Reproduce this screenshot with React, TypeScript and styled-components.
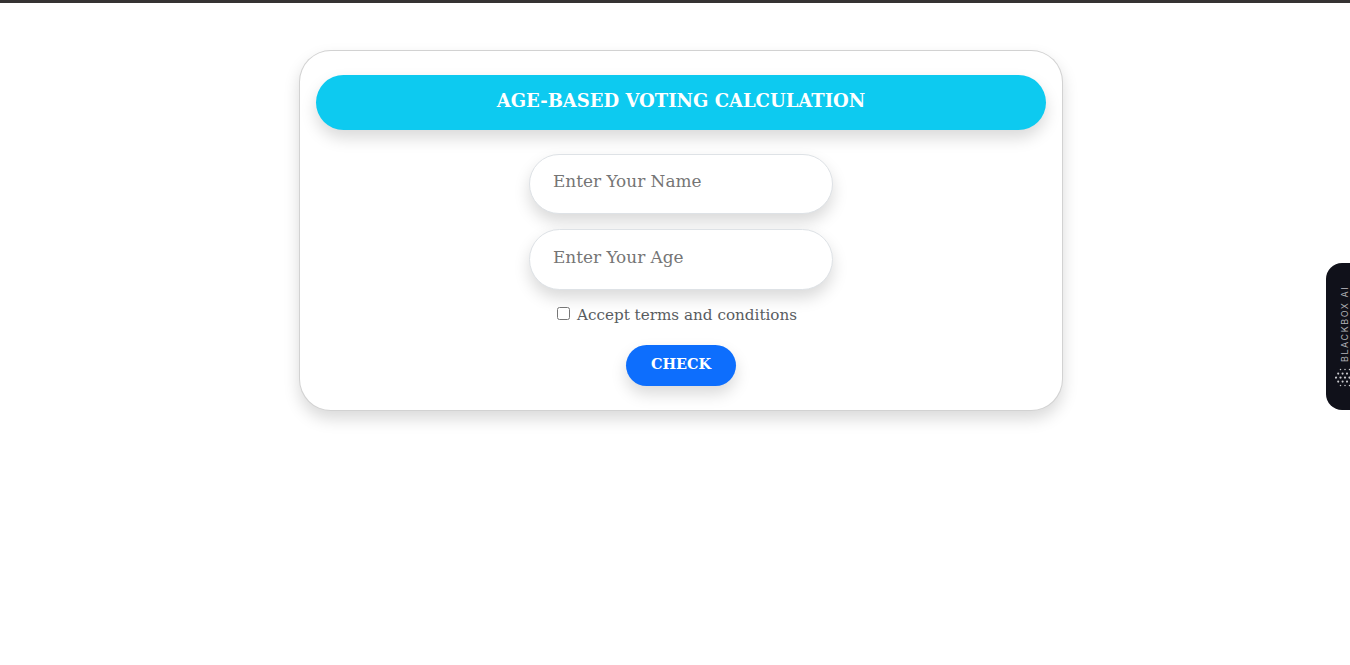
import React from 'react';
import styled, { createGlobalStyle } from 'styled-components';

const GlobalStyle = createGlobalStyle`
  *, *::before, *::after { box-sizing: border-box; }
  html, body { margin: 0; height: 100%; background: #fff; overflow: hidden; }
  body { font-family: 'Bookman Old Style', 'DejaVu Serif', serif; color: #212529; }
`;

const Page = styled.main`
  min-height: 665px;
  padding: 47px 0 0 299px;
  border-top: 3px solid #353333;
`;

const Card = styled.section`
  width: 764px;
  height: 361px;
  padding: 24px 16px;
  display: flex;
  flex-direction: column;
  align-items: center;
  border: 1px solid rgba(0, 0, 0, 0.175);
  border-radius: 32px;
  background: #fff;
  box-shadow: 0 8px 16px rgba(0, 0, 0, 0.15);
`;

const Title = styled.h1`
  width: 100%;
  height: 55px;
  margin: 0 0 24px;
  padding-top: 14px;
  border-radius: 32px;
  background: #0dcaf0;
  box-shadow: 0 8px 16px rgba(0, 0, 0, 0.15);
  color: #fff;
  font-size: 18px;
  line-height: 24px;
  font-weight: 700;
  text-align: center;
  white-space: nowrap;
`;

const Field = styled.input<{ $tall?: boolean }>`
  width: 304px;
  height: ${(p) => (p.$tall ? 61 : 60)}px;
  margin: 0 0 15px;
  padding: 0 23px 6px;
  border: 1px solid #dee2e6;
  border-radius: 32px;
  background: #fff;
  box-shadow: 0 8px 16px rgba(0, 0, 0, 0.15);
  font-family: inherit;
  font-size: 16.9px;
  outline: none;
  &::placeholder { color: #757575; opacity: 1; }
`;

const Terms = styled.label`
  display: flex;
  align-items: center;
  width: 248px;
  height: 20px;
  gap: 7px;
  font-size: 15.2px;
  color: #595c5f;
  white-space: nowrap;
`;

const Checkbox = styled.input`
  flex: none;
  width: 13px;
  height: 13px;
  margin: 0 0 4px;
`;

const CheckButton = styled.button`
  width: 110px;
  height: 41px;
  margin-top: 20px;
  padding: 0 0 4px;
  border: 0;
  border-radius: 32px;
  background: #0d6efd;
  box-shadow: 0 8px 16px rgba(0, 0, 0, 0.15);
  color: #fff;
  font-family: inherit;
  font-size: 14.4px;
  font-weight: 700;
`;

const SideTab = styled.aside`
  position: fixed;
  top: 263px;
  right: 0;
  width: 24px;
  height: 147px;
  padding: 20px 0 0 9px;
  border-radius: 16px 0 0 16px;
  background: #10111a;
  overflow: hidden;
`;

const TabLabel = styled.div`
  width: 20px;
  height: 79px;
  line-height: 20px;
  writing-mode: vertical-rl;
  transform: rotate(180deg);
  font-family: Inter, sans-serif;
  font-size: 9px;
  letter-spacing: 1.55px;
  color: #b3b3b8;
  white-space: nowrap;
`;

const DotLogo = styled.svg`
  display: block;
  margin-top: 6px;
`;

const rows = [
  { y: 1.6, xs: [5.5, 10, 14.5], r: 0.75 },
  { y: 5.6, xs: [3.2, 7.6, 12, 16.4], r: 1.05 },
  { y: 9.6, xs: [1, 5.5, 10, 14.5], r: 1.15 },
  { y: 13.6, xs: [3.2, 7.6, 12, 16.4], r: 1.05 },
  { y: 17.6, xs: [5.5, 10, 14.5], r: 0.75 },
];

export default function App() {
  return (
    <>
      <GlobalStyle />
      <Page>
        <Card>
          <Title>AGE-BASED VOTING CALCULATION</Title>
          <Field placeholder="Enter Your Name" />
          <Field $tall placeholder="Enter Your Age" />
          <Terms>
            <Checkbox type="checkbox" />
            <span>Accept terms and conditions</span>
          </Terms>
          <CheckButton>CHECK</CheckButton>
        </Card>
      </Page>
      <SideTab>
        <TabLabel>BLACKBOX AI</TabLabel>
        <DotLogo width="20" height="20" viewBox="0 0 20 20" fill="#c9c9cd">
          {rows.map((row) =>
            row.xs.map((x) => <circle key={`${x}-${row.y}`} cx={x} cy={row.y} r={row.r} />)
          )}
        </DotLogo>
      </SideTab>
    </>
  );
}
